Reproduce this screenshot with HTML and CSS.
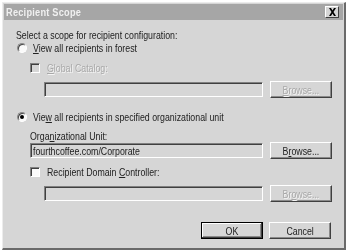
FILE: index.html
```html
<!DOCTYPE html>
<html>
<head>
<meta charset="utf-8">
<link rel="stylesheet" href="styles.css">
</head>
<body>
<div class="win">
  <div class="titlebar">
    <span class="title t">Recipient Scope</span>
    <span class="close"><svg width="9" height="8" viewBox="0 0 9 8"><path d="M1 0h2l1.5 2.5L6 0h2L5.5 4 8 8H6L4.5 5.5 3 8H1l2.5-4z" fill="#000"/></svg></span>
  </div>
  <div class="body">
    <div class="intro"><span class="t">Select a scope for recipient configuration:</span></div>
    <div class="row radio-row r1">
      <span class="radio"></span>
      <span class="t"><u>V</u>iew all recipients in forest</span>
    </div>
    <div class="row check-row dis c1">
      <span class="check disabled"></span>
      <span class="t"><u>G</u>lobal Catalog:</span>
    </div>
    <div class="field-row f1">
      <span class="input disabled"></span>
      <span class="btn disabled"><span class="t c"><u>B</u>rowse...</span></span>
    </div>
    <div class="row radio-row r2">
      <span class="radio checked"></span>
      <span class="t">Vie<u>w</u> all recipients in specified organizational unit</span>
    </div>
    <div class="label ou"><span class="t">Orga<u>n</u>izational Unit:</span></div>
    <div class="field-row f2">
      <span class="input ro"><span class="t">fourthcoffee.com/Corporate</span></span>
      <span class="btn"><span class="t c">B<u>r</u>owse...</span></span>
    </div>
    <div class="row check-row c2">
      <span class="check"></span>
      <span class="t">Recipient Domain <u>C</u>ontroller:</span>
    </div>
    <div class="field-row f3">
      <span class="input disabled"></span>
      <span class="btn disabled"><span class="t c">Br<u>o</u>wse...</span></span>
    </div>
    <div class="footer">
      <span class="btn default"><span class="t c">OK</span></span>
      <span class="btn"><span class="t c">Cancel</span></span>
    </div>
  </div>
</div>
</body>
</html>
```
FILE: styles.css
```css
html, body { margin: 0; padding: 0; background: #fff; }
body { width: 348px; height: 252px; overflow: hidden; font-family: "Liberation Sans", Arial, sans-serif; font-size: 11px; color: #222; }
u { text-decoration: underline; text-underline-offset: 1px; }
.t { display: inline-block; white-space: nowrap; transform: scaleX(0.8); transform-origin: 0 50%; }
.t.c { transform-origin: 50% 50%; }
.win {
  margin: 2px 2px 0 2px;
  height: 248px;
  box-sizing: border-box;
  background: #d6d6d6;
  border-left: 1px solid #ececec;
  border-top: 1px solid #ececec;
  border-right: 2px solid #6a6a6a;
  border-bottom: 2px solid #6a6a6a;
  display: flex; flex-direction: column;
  padding: 1px 1px 0 1px;
}
.titlebar {
  height: 16px;
  background: #a6a6a6;
  display: flex; align-items: center; justify-content: space-between;
  padding: 0 4px 0 2px;
}
.title { color: #f0f0f0; font-weight: bold; font-size: 11.5px; letter-spacing: 0.3px; }
.close {
  width: 14px; height: 12px; box-sizing: border-box;
  background: #d6d6d6;
  border-top: 1px solid #fff; border-left: 1px solid #fff;
  border-right: 1px solid #404040; border-bottom: 1px solid #404040;
  display: flex; align-items: center; justify-content: center;
}
.body { padding: 8px 0 0 12px; display: flex; flex-direction: column; }
.intro { height: 14px; line-height: 14px; }
.row { display: flex; align-items: center; height: 14px; line-height: 14px; }
.radio-row { gap: 6px; }
.check-row { gap: 7px; padding-left: 14px; }
.r1 { margin-top: -1px; }
.c1 { margin-top: 6px; }
.radio {
  width: 10px; height: 10px; border-radius: 50%; box-sizing: border-box; flex: none;
  background: #fafafa;
  border: 1px solid #888; border-right-color: #fff; border-bottom-color: #fff;
  box-shadow: inset 1px 1px 0 #444;
  display: inline-flex; align-items: center; justify-content: center;
  margin-left: 1px;
}
.radio.checked::after { content: ""; width: 4px; height: 4px; border-radius: 50%; background: #000; }
.check {
  width: 10px; height: 10px; box-sizing: border-box; flex: none;
  background: #fafafa;
  border-top: 1px solid #808080; border-left: 1px solid #808080;
  border-right: 1px solid #fff; border-bottom: 1px solid #fff;
  box-shadow: inset 1px 1px 0 #404040;
}
.check.disabled { background: #d6d6d6; }
.dis, .btn.disabled { color: #a8a8a8; text-shadow: 1px 1px 0 #f4f4f4; }
.field-row { display: flex; align-items: center; gap: 7px; }
.f1 { margin: 6px 0 0 28px; }
.f2 { margin: 0 0 0 14px; }
.f3 { margin: 6px 0 0 28px; }
.input {
  height: 15px; box-sizing: border-box; line-height: 12px; overflow: hidden;
  border-top: 1px solid #808080; border-left: 1px solid #808080;
  border-right: 1px solid #fff; border-bottom: 1px solid #fff;
  box-shadow: inset 1px 1px 0 #404040;
  background: #d6d6d6; padding: 1px 3px;
}
.f1 .input, .f3 .input { width: 219px; }
.f2 .input { width: 233px; padding-left: 2px; }
.btn {
  width: 62px; height: 17px; box-sizing: border-box;
  border-top: 1px solid #fff; border-left: 1px solid #fff;
  border-right: 1px solid #404040; border-bottom: 1px solid #404040;
  box-shadow: inset -1px -1px 0 #8a8a8a;
  display: inline-flex; align-items: center; justify-content: center;
  background: #d6d6d6;
}
.r2 { margin-top: 12px; }
.label { height: 13px; line-height: 14px; margin: 5px 0 0 14px; }
.c2 { margin-top: 6px; }
.footer { display: flex; justify-content: flex-end; gap: 6px; margin-top: 20px; padding-right: 12px; }
.btn.default { border: 1px solid #000; box-shadow: inset -1px -1px 0 #404040, inset 1px 1px 0 #fff, inset -2px -2px 0 #8a8a8a; }
```
